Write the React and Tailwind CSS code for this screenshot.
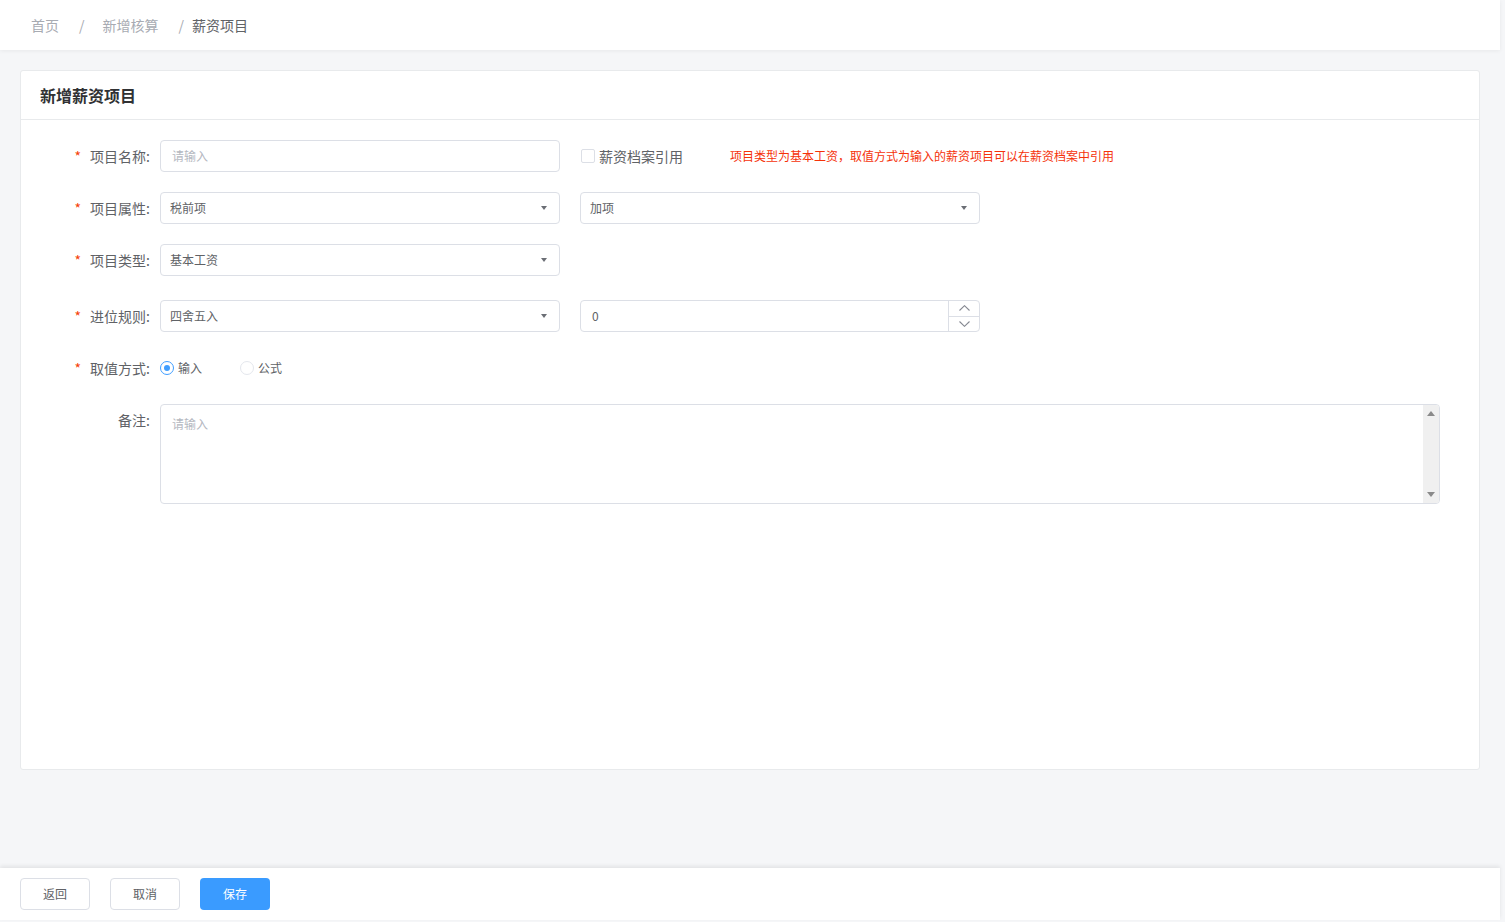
const Caret = () => (
  <span className="w-0 h-0 border-l-[3px] border-r-[3px] border-t-[4px] border-l-transparent border-r-transparent border-t-[#6b6e75]" />
);

const Chevron = ({ up }) => (
  <svg width="11" height="6" viewBox="0 0 11 6" fill="none" stroke="#858891" strokeWidth="1.1">
    {up ? <polyline points="0.5,5.5 5.5,0.7 10.5,5.5" /> : <polyline points="0.5,0.5 5.5,5.3 10.5,0.5" />}
  </svg>
);

function Label({ text, required = true }) {
  return (
    <div className="w-[139px] shrink-0 flex justify-end items-center pr-[10px] text-sm text-[#606266]">
      {required && <span className="text-[#f5420a] mr-[9px] text-sm">*</span>}
      <span>{text}:</span>
    </div>
  );
}

function Select({ value }) {
  return (
    <div className="w-[400px] h-8 border border-[#dcdfe6] rounded-[4px] bg-white flex items-center justify-between pl-[9px] pr-[12px] text-xs text-[#606266]">
      <span>{value}</span>
      <Caret />
    </div>
  );
}

export default function App() {
  return (
    <div className="h-[922px] bg-[#f5f6f8] flex flex-col font-['Noto_Sans_CJK_SC',sans-serif] overflow-hidden">
      {/* breadcrumb */}
      <div className="w-[1500px] h-[50px] shrink-0 bg-white shadow-[0_1px_4px_rgba(0,0,0,0.06)] flex items-center pl-[31px] text-sm">
        <span className="text-[#a8abb2]">首页</span>
        <span className="text-[#a8abb2] ml-[20px] mr-[18px]">/</span>
        <span className="text-[#a8abb2]">新增核算</span>
        <span className="text-[#a8abb2] ml-[20px] mr-[8px]">/</span>
        <span className="text-[#606266]">薪资项目</span>
      </div>

      {/* card */}
      <div className="pl-5 pt-5">
        <div className="w-[1460px] h-[700px] bg-white border border-[#e8eaec] rounded-[3px]">
          <div className="h-[49px] border-b border-[#e8eaec] flex items-center pl-[19px]">
            <h1 className="text-base font-bold text-[#303133]">新增薪资项目</h1>
          </div>

          <div className="pt-5 flex flex-col">
            {/* row 1 */}
            <div className="flex items-center h-8">
              <Label text="项目名称" />
              <div className="w-[400px] h-8 border border-[#dcdfe6] rounded-[4px] flex items-center pl-[11px] text-xs text-[#b4b8bf]">
                请输入
              </div>
              <div className="ml-[21px] flex items-center">
                <span className="w-[14px] h-[14px] border border-[#dcdfe6] rounded-[2px] bg-white" />
                <span className="ml-[4px] text-sm text-[#606266]">薪资档案引用</span>
              </div>
              <span className="ml-[47px] text-xs text-[#f5320a]">
                项目类型为基本工资，取值方式为输入的薪资项目可以在薪资档案中引用
              </span>
            </div>

            {/* row 2 */}
            <div className="flex items-center h-8 mt-5">
              <Label text="项目属性" />
              <Select value="税前项" />
              <div className="ml-5">
                <Select value="加项" />
              </div>
            </div>

            {/* row 3 */}
            <div className="flex items-center h-8 mt-5">
              <Label text="项目类型" />
              <Select value="基本工资" />
            </div>

            {/* row 4 */}
            <div className="flex items-center h-8 mt-6">
              <Label text="进位规则" />
              <Select value="四舍五入" />
              <div className="ml-5 w-[400px] h-8 border border-[#dcdfe6] rounded-[4px] flex">
                <div className="flex-1 flex items-center pl-[11px] text-xs text-[#606266]">0</div>
                <div className="w-[31px] border-l border-[#dcdfe6] flex flex-col">
                  <div className="flex-1 flex items-center justify-center border-b border-[#dcdfe6]">
                    <Chevron up />
                  </div>
                  <div className="flex-1 flex items-center justify-center">
                    <Chevron />
                  </div>
                </div>
              </div>
            </div>

            {/* row 5 */}
            <div className="flex items-center h-8 mt-5">
              <Label text="取值方式" />
              <div className="flex items-center">
                <span className="w-[14px] h-[14px] rounded-full border border-[#409eff] flex items-center justify-center">
                  <span className="w-[6px] h-[6px] rounded-full bg-[#409eff]" />
                </span>
                <span className="ml-[4px] text-xs text-[#606266]">输入</span>
              </div>
              <div className="flex items-center ml-[38px]">
                <span className="w-[14px] h-[14px] rounded-full border border-[#e4e7ed]" />
                <span className="ml-[4px] text-xs text-[#606266]">公式</span>
              </div>
            </div>

            {/* row 6 */}
            <div className="flex mt-5">
              <div className="w-[139px] shrink-0 flex justify-end pr-[10px] pt-[6px] text-sm text-[#606266]">
                备注:
              </div>
              <div className="w-[1280px] h-[100px] border border-[#dcdfe6] rounded-[4px] flex overflow-hidden">
                <textarea
                  placeholder="请输入"
                  className="flex-1 resize-none outline-none pl-[11px] pt-[11px] text-xs text-[#606266] placeholder:text-[#b4b8bf]"
                />
                <div className="w-[16px] bg-[#f0f0f0] flex flex-col justify-between items-center py-[6px]">
                  <span className="w-0 h-0 border-l-[4px] border-r-[4px] border-b-[5px] border-l-transparent border-r-transparent border-b-[#8a8a8a]" />
                  <span className="w-0 h-0 border-l-[4px] border-r-[4px] border-t-[5px] border-l-transparent border-r-transparent border-t-[#8a8a8a]" />
                </div>
              </div>
            </div>
          </div>
        </div>
      </div>

      <div className="flex-1" />

      {/* footer */}
      <div className="w-[1500px] h-[52px] shrink-0 mb-[2px] bg-white shadow-[0_-2px_4px_rgba(0,0,0,0.08)] flex items-center pl-5 gap-5">
        <button className="w-[70px] h-8 border border-[#dcdfe6] rounded-[4px] bg-white text-xs text-[#606266]">
          返回
        </button>
        <button className="w-[70px] h-8 border border-[#dcdfe6] rounded-[4px] bg-white text-xs text-[#606266]">
          取消
        </button>
        <button className="w-[70px] h-8 rounded-[4px] bg-[#3a9bff] text-xs text-white">
          保存
        </button>
      </div>
    </div>
  );
}
